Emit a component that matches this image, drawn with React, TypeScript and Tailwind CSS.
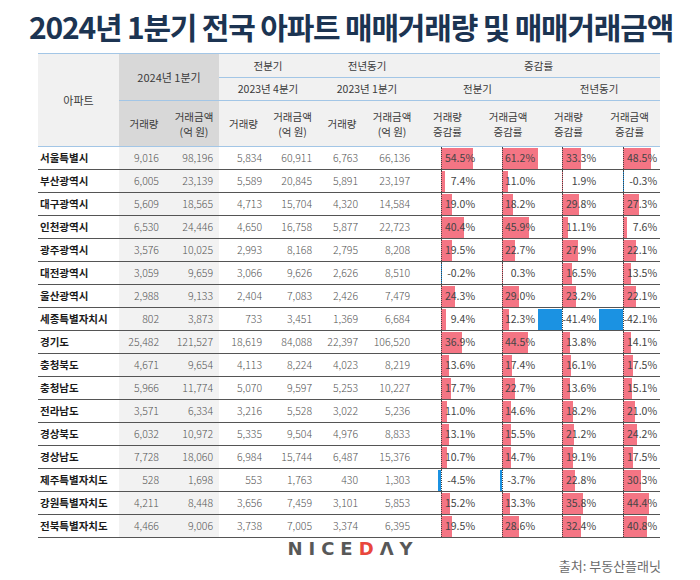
// 2024 Q1 apartment trade volume / amount table
// Title on top, comparison table with inline % bars, logo + source below

type Row = {
  name: string;
  nums: string[];
  pcts: number[];
};

const ROWS: Row[] = [
  { name: '서울특별시', nums: ['9,016', '98,196', '5,834', '60,911', '6,763', '66,136'], pcts: [54.5, 61.2, 33.3, 48.5] },
  { name: '부산광역시', nums: ['6,005', '23,139', '5,589', '20,845', '5,891', '23,197'], pcts: [7.4, 11.0, 1.9, -0.3] },
  { name: '대구광역시', nums: ['5,609', '18,565', '4,713', '15,704', '4,320', '14,584'], pcts: [19.0, 18.2, 29.8, 27.3] },
  { name: '인천광역시', nums: ['6,530', '24,446', '4,650', '16,758', '5,877', '22,723'], pcts: [40.4, 45.9, 11.1, 7.6] },
  { name: '광주광역시', nums: ['3,576', '10,025', '2,993', '8,168', '2,795', '8,208'], pcts: [19.5, 22.7, 27.9, 22.1] },
  { name: '대전광역시', nums: ['3,059', '9,659', '3,066', '9,626', '2,626', '8,510'], pcts: [-0.2, 0.3, 16.5, 13.5] },
  { name: '울산광역시', nums: ['2,988', '9,133', '2,404', '7,083', '2,426', '7,479'], pcts: [24.3, 29.0, 23.2, 22.1] },
  { name: '세종특별자치시', nums: ['802', '3,873', '733', '3,451', '1,369', '6,684'], pcts: [9.4, 12.3, -41.4, -42.1] },
  { name: '경기도', nums: ['25,482', '121,527', '18,619', '84,088', '22,397', '106,520'], pcts: [36.9, 44.5, 13.8, 14.1] },
  { name: '충청북도', nums: ['4,671', '9,654', '4,113', '8,224', '4,023', '8,219'], pcts: [13.6, 17.4, 16.1, 17.5] },
  { name: '충청남도', nums: ['5,966', '11,774', '5,070', '9,597', '5,253', '10,227'], pcts: [17.7, 22.7, 13.6, 15.1] },
  { name: '전라남도', nums: ['3,571', '6,334', '3,216', '5,528', '3,022', '5,236'], pcts: [11.0, 14.6, 18.2, 21.0] },
  { name: '경상북도', nums: ['6,032', '10,972', '5,335', '9,504', '4,976', '8,833'], pcts: [13.1, 15.5, 21.2, 24.2] },
  { name: '경상남도', nums: ['7,728', '18,060', '6,984', '15,744', '6,487', '15,376'], pcts: [10.7, 14.7, 19.1, 17.5] },
  { name: '제주특별자치도', nums: ['528', '1,698', '553', '1,763', '430', '1,303'], pcts: [-4.5, -3.7, 22.8, 30.3] },
  { name: '강원특별자치도', nums: ['4,211', '8,448', '3,656', '7,459', '3,101', '5,853'], pcts: [15.2, 13.3, 35.8, 44.4] },
  { name: '전북특별자치도', nums: ['4,466', '9,006', '3,738', '7,005', '3,374', '6,395'], pcts: [19.5, 28.6, 32.4, 40.8] },
];

const AXIS = 24; // px from cell left where 0% sits
const SCALE = 0.58; // px per percent

const NUM_PAD = ['pr-[10px]', 'pr-[6px]', 'pr-[6px]', 'pr-[5px]', 'pr-[9px]', 'pr-[7px]'];

function PctCell({ v }: { v: number }) {
  const w = Math.abs(v) * SCALE;
  const barStyle = v >= 0 ? { left: AXIS, width: w } : { left: AXIS - w, width: w };
  return (
    <td className="relative p-0 pr-[3px] text-right font-normal text-[#444]">
      <div
        className={`absolute top-[1px] bottom-0 ${v >= 0 ? 'bg-[#f47584]' : 'bg-[#1b92e2]'}`}
        style={barStyle}
      />
      <div className="absolute top-0 bottom-0 left-[24px] border-l border-dotted border-[#444]" />
      <span className="relative">{v.toFixed(1)}%</span>
    </td>
  );
}

export default function App() {
  const hb = 'border-b-[1.5px] border-[#a3c6e6]';
  return (
    <div
      className="w-[700px] h-[580px] bg-white overflow-hidden"
      style={{ fontFamily: '"Noto Sans CJK KR", "Noto Sans", sans-serif' }}
    >
      {/* Title */}
      <h1 className="pt-[7px] pl-[2px] h-[53px] text-center text-[30px] leading-[38px] font-bold tracking-[-1.2px] text-[#1c3452]">
        2024년 1분기 전국 아파트 매매거래량 및 매매거래금액
      </h1>

      {/* Table */}
      <table className="ml-[38px] w-[622px] table-fixed border-collapse text-[10.5px] font-light text-[#555]">
        <colgroup>
          <col className="w-[81px]" />
          <col className="w-[50px]" />
          <col className="w-[50px]" />
          <col className="w-[49px]" />
          <col className="w-[49px]" />
          <col className="w-[50px]" />
          <col className="w-[50px]" />
          <col className="w-[61px]" />
          <col className="w-[60px]" />
          <col className="w-[61px]" />
          <col className="w-[61px]" />
        </colgroup>
        <thead className="text-[#3a3a3a]">
          <tr className="h-[24px] border-t-[1.5px] border-[#a3c6e6]">
            <th rowSpan={3} className={`bg-[#f1f1f1] font-normal text-[11px] ${hb}`}>아파트</th>
            <th rowSpan={2} colSpan={2} className={`bg-[#d8d8d8] font-normal text-[11px] ${hb}`}>2024년 1분기</th>
            <th colSpan={2} className={`bg-[#f1f1f1] font-normal ${hb}`}>전분기</th>
            <th colSpan={2} className={`bg-[#f1f1f1] font-normal ${hb}`}>전년동기</th>
            <th colSpan={4} className={`bg-[#f1f1f1] font-normal ${hb}`}>증감률</th>
          </tr>
          <tr className="h-[23px]">
            <th colSpan={2} className={`bg-[#f1f1f1] font-normal ${hb}`}>2023년 4분기</th>
            <th colSpan={2} className={`bg-[#f1f1f1] font-normal ${hb}`}>2023년 1분기</th>
            <th colSpan={2} className={`bg-[#f1f1f1] font-normal ${hb}`}>전분기</th>
            <th colSpan={2} className={`bg-[#f1f1f1] font-normal ${hb}`}>전년동기</th>
          </tr>
          <tr className="h-[46px] leading-[15px]">
            <th className={`bg-[#d8d8d8] font-normal ${hb}`}>거래량</th>
            <th className={`bg-[#d8d8d8] font-normal ${hb}`}>거래금액<br />(억 원)</th>
            <th className={`bg-[#f1f1f1] font-normal ${hb}`}>거래량</th>
            <th className={`bg-[#f1f1f1] font-normal ${hb}`}>거래금액<br />(억 원)</th>
            <th className={`bg-[#f1f1f1] font-normal ${hb}`}>거래량</th>
            <th className={`bg-[#f1f1f1] font-normal ${hb}`}>거래금액<br />(억 원)</th>
            <th className={`bg-[#f1f1f1] font-normal ${hb}`}>거래량<br />증감률</th>
            <th className={`bg-[#f1f1f1] font-normal ${hb}`}>거래금액<br />증감률</th>
            <th className={`bg-[#f1f1f1] font-normal ${hb}`}>거래량<br />증감률</th>
            <th className={`bg-[#f1f1f1] font-normal ${hb}`}>거래금액<br />증감률</th>
          </tr>
        </thead>
        <tbody>
          {ROWS.map(row => (
            <tr key={row.name} className="h-[23px] border-b border-[#555]">
              <td className="pl-[2px] text-[10.5px] font-bold text-[#1a1a1a] whitespace-nowrap">{row.name}</td>
              {row.nums.map((n, i) => (
                <td
                  key={i}
                  className={`text-right ${NUM_PAD[i]} ${i < 2 ? 'bg-[#f2f2f2]' : ''}`}
                >
                  {n}
                </td>
              ))}
              {row.pcts.map((p, i) => (
                <PctCell key={i} v={p} />
              ))}
            </tr>
          ))}
        </tbody>
      </table>

      {/* Footer: logo + source */}
      <div className="w-[700px]">
        <div
          className="mt-[2px] h-[17px] pl-[6px] text-center text-[18px] leading-[17px] font-bold tracking-[6px] text-[#585858]"
          style={{ fontFamily: '"DejaVu Sans", sans-serif' }}
        >
          NICE<span className="text-[#e8473d]">D</span>ΛY
        </div>
        <div className="mt-[1px] pr-[39px] text-right text-[13px] leading-[16px] text-[#6b6b6b]">
          출처: 부동산플래닛
        </div>
      </div>
    </div>
  );
}
